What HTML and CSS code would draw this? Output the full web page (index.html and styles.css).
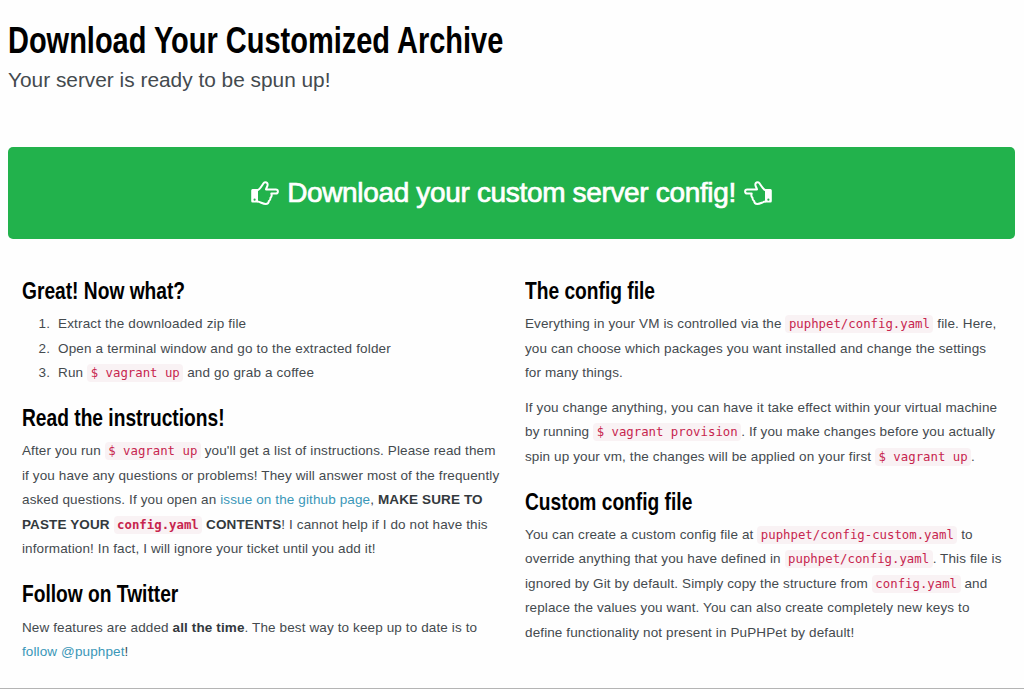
FILE: index.html
```html
<!DOCTYPE html>
<html lang="en">
<head>
    <meta charset="UTF-8">
    <meta name="viewport" content="width=device-width, initial-scale=1.0">
    <title>Download Your Customized Archive</title>
    <link rel="stylesheet" href="styles.css">
</head>
<body>
    <div class="page">
        <header>
            <h1>Download Your Customized Archive</h1>
            <p class="lead">Your server is ready to be spun up!</p>
        </header>

        <a class="download" href="#">
            <svg class="hand" viewBox="0 0 28 24">
                <path class="cuff" fill-rule="evenodd" d="M1.500 8H7V21.500H1.500Q0.200 21.500 0.200 20V9.500Q0.200 8 1.500 8ZM3.600 17.600A1.100 1.100 0 1 0 3.600 19.800A1.100 1.100 0 1 0 3.600 17.600Z"/>
                <path d="M6.500 9.200C9.500 8.500 11.500 3 13.300 1.500C16 0.800 17 2.500 16.500 4.500C16.200 6 15.200 7 15 8.400H24.800C27.600 8.400 27.600 12.600 24.800 12.600H20.300C21 14.200 20.500 15.800 19.500 16.700C19.600 18.500 19 19.600 17.800 20.200C17.700 22.200 16.500 22.900 14.700 22.900C11.500 22.900 9.500 20.900 6.500 20.600"/>
            </svg>
            <span>Download your custom server config!</span>
            <svg class="hand flip" viewBox="0 0 28 24">
                <path class="cuff" fill-rule="evenodd" d="M1.500 8H7V21.500H1.500Q0.200 21.500 0.200 20V9.500Q0.200 8 1.500 8ZM3.600 17.600A1.100 1.100 0 1 0 3.600 19.800A1.100 1.100 0 1 0 3.600 17.600Z"/>
                <path d="M6.500 9.200C9.500 8.500 11.500 3 13.300 1.500C16 0.800 17 2.500 16.500 4.500C16.200 6 15.200 7 15 8.400H24.800C27.600 8.400 27.600 12.600 24.800 12.600H20.300C21 14.200 20.500 15.800 19.500 16.700C19.600 18.500 19 19.600 17.800 20.200C17.700 22.200 16.500 22.900 14.700 22.900C11.500 22.900 9.500 20.900 6.500 20.600"/>
            </svg>
        </a>

        <div class="row">
            <div class="col">
                <h3>Great! Now what?</h3>
                <ol>
                    <li>Extract the downloaded zip file</li>
                    <li>Open a terminal window and go to the extracted folder</li>
                    <li>Run <code>$ vagrant up</code> and go grab a coffee</li>
                </ol>

                <h3>Read the instructions!</h3>
                <p>After you run <code>$ vagrant up</code> you'll get a list of instructions. Please read them<br>
                if you have any questions or problems! They will answer most of the frequently<br>
                asked questions. If you open an <a href="#">issue on the github page</a>, <strong>MAKE SURE TO<br>
                PASTE YOUR <code>config.yaml</code> CONTENTS</strong>! I cannot help if I do not have this<br>
                information! In fact, I will ignore your ticket until you add it!</p>

                <h3>Follow on Twitter</h3>
                <p>New features are added <strong>all the time</strong>. The best way to keep up to date is to<br>
                <a href="#">follow @puphpet</a>!</p>
            </div>

            <div class="col">
                <h3>The config file</h3>
                <p>Everything in your VM is controlled via the <code>puphpet/config.yaml</code> file. Here,<br>
                you can choose which packages you want installed and change the settings<br>
                for many things.</p>
                <p>If you change anything, you can have it take effect within your virtual machine<br>
                by running <code>$ vagrant provision</code>. If you make changes before you actually<br>
                spin up your vm, the changes will be applied on your first <code>$ vagrant up</code>.</p>

                <h3>Custom config file</h3>
                <p>You can create a custom config file at <code>puphpet/config-custom.yaml</code> to<br>
                override anything that you have defined in <code>puphpet/config.yaml</code>. This file is<br>
                ignored by Git by default. Simply copy the structure from <code>config.yaml</code> and<br>
                replace the values you want. You can also create completely new keys to<br>
                define functionality not present in PuPHPet by default!</p>
            </div>
        </div>
    </div>
</body>
</html>
```
FILE: styles.css
```css
body {
    margin: 0;
    background: #fefefe;
    color: #444a4e;
    font-family: "Liberation Sans", Arial, sans-serif;
    font-size: 13.5px;
    line-height: 24.5px;
}
.page {
    box-sizing: border-box;
    height: 689px;
    padding: 20px 9px 0 8px;
    border-bottom: 1px solid #b4b4b4;
    overflow: hidden;
}
/* condensed headings */
h1, h3 {
    width: max-content;
    margin: 0;
    color: #000;
    font-weight: bold;
    white-space: nowrap;
    transform: scaleX(0.783);
    transform-origin: left;
}
h1 {
    font-size: 37px;
    line-height: 42px;
}
.lead {
    margin: 3px 0 52px;
    font-size: 20.85px;
    line-height: 30px;
    letter-spacing: 0;
}
.download {
    display: flex;
    align-items: center;
    justify-content: center;
    gap: 8px;
    height: 92px;
    border-radius: 5px;
    background: #22b24c;
    color: #fff;
    font-size: 28px;
    letter-spacing: -0.34px;
    -webkit-text-stroke: 0.7px #fff;
    text-decoration: none;
}
.hand {
    width: 28px;
    height: 24px;
    fill: none;
    stroke: #fff;
    stroke-width: 2;
    stroke-linejoin: round;
}
.cuff {
    fill: #fff;
    stroke: none;
}
.flip {
    transform: scaleX(-1);
}
.row {
    display: grid;
    grid-template-columns: 503px 1fr;
    padding: 36px 0 0 14px;
}
h3 {
    font-size: 24.5px;
    line-height: 32px;
    margin-bottom: 5.2px;
}
p, ol {
    margin: 0 0 10px;
    white-space: nowrap;
    letter-spacing: 0.12px;
}
ol {
    padding-left: 32px;
    letter-spacing: 0.165px;
}
li {
    padding-left: 4px;
}
.row h3:not(:first-child) {
    margin-top: 16.5px;
}
a {
    color: #3a97b8;
    text-decoration: none;
}
strong {
    color: #33393d;
}
code {
    padding: 2px 3.5px;
    border-radius: 4px;
    background: #f9f2f4;
    color: #c7254e;
    font-family: "DejaVu Sans Mono", monospace;
    font-size: 12.33px;
    letter-spacing: 0;
}
```
